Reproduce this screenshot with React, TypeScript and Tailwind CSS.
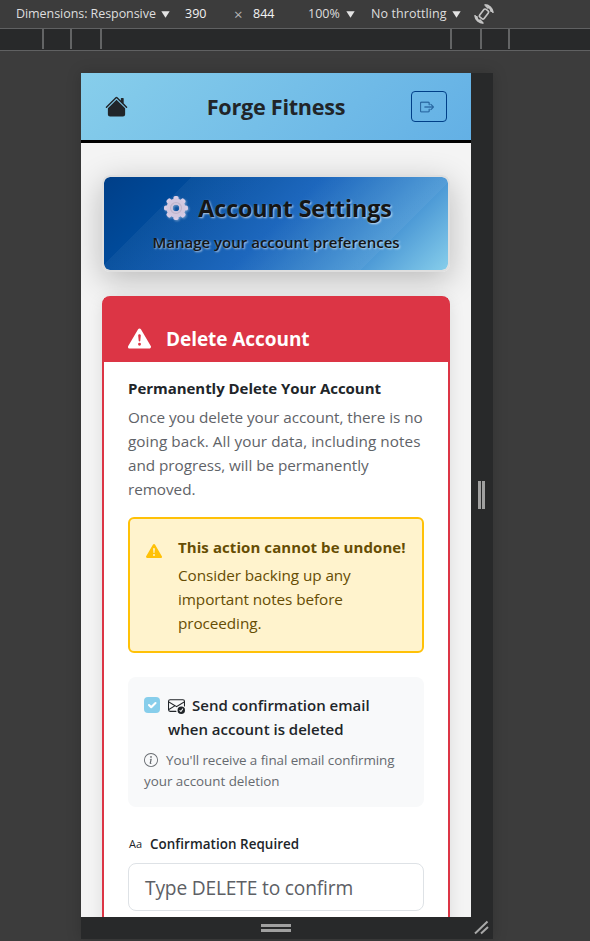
import React from "react";
import {
  BsHouseFill,
  BsBoxArrowRight,
  BsExclamationTriangleFill,
  BsEnvelopeCheck,
  BsInfoCircle,
} from "react-icons/bs";

function Caret() {
  return (
    <svg className="h-[7px] w-[9px] shrink-0" viewBox="0 0 9 7">
      <path d="M0.3 0.3h8.4L4.5 6.8z" fill="#e3e3e3" />
    </svg>
  );
}

function Toolbar() {
  return (
    <div className="flex h-7 items-center pt-px text-[12.5px] leading-none whitespace-nowrap text-[#dedede]">
      <span className="ml-4 w-[145px] tracking-[-0.06px]">Dimensions: Responsive</span>
      <Caret />
      <span className="ml-[15px] w-[49px] text-[#f2f2f2]">390</span>
      <span className="w-[19px] text-[15px] text-[#b5b5b5]">×</span>
      <span className="w-[55px] text-[#f2f2f2]">844</span>
      <span className="w-[38px]">100%</span>
      <Caret />
      <span className="ml-4 w-[81px] tracking-[0.08px]">No throttling</span>
      <Caret />
      <svg className="-mt-px ml-3 h-[22px] w-[22px]" viewBox="0 0 22 22" fill="none" stroke="#c4c4c4" strokeWidth="1.7">
        <rect x="8.2" y="6" width="5.6" height="10" rx="1.6" transform="rotate(38 11 11)" />
        <path d="M11.5 1.8c4.5 0 8 3.2 8.6 8M12 2l3.500 3.500M15 3.500c2 1.200 3.300 3.200 3.500 5.500M10.500 20.200c-4.500 0-8-3.200-8.600-8M10 20l-3.500-3.500M7 18.500c-2-1.200-3.300-3.200-3.500-5.500" />
      </svg>
    </div>
  );
}

function Ruler() {
  return (
    <div className="flex h-[23px] border-y border-[#606162] bg-[#28292a]">
      <div className="ml-[42px] h-5 w-[30px] border-x-2 border-[#636465]" />
      <div className="h-5 w-[30px] border-r-2 border-[#636465]" />
      <div className="ml-[348px] h-5 w-8 border-x-2 border-[#636465]" />
      <div className="h-5 w-7 border-r-2 border-[#636465]" />
    </div>
  );
}

function Gear() {
  return (
    <svg className="h-[26px] w-[26px] shrink-0 drop-shadow-[1px_1px_1px_rgba(255,255,255,0.4)]" viewBox="-13 -13 26 26">
      <g fill="#d9cde6">
        {[0, 45, 90, 135, 180, 225, 270, 315].map((a) => (
          <rect key={a} x="-2.6" y="-12" width="5.2" height="7" rx="1.8" transform={`rotate(${a})`} />
        ))}
      </g>
      <circle r="6.6" fill="none" stroke="#d3c8df" strokeWidth="6" />
      <circle r="5.4" fill="none" stroke="#bfb5cb" strokeWidth="1.4" />
      <circle r="4" fill="none" stroke="#d0c5db" strokeWidth="1.6" />
    </svg>
  );
}

function Banner() {
  return (
    <div className="h-[97px] rounded-lg border-2 border-[#dfdfdf] bg-[linear-gradient(135deg,transparent_20%,rgba(255,255,255,0.045)_20%,rgba(255,255,255,0.045)_80%,transparent_80%),linear-gradient(135deg,#003f88_0%,#004a9a_20%,#1360ba_50%,#4d9ad6_80%,#87ceeb_100%)] bg-clip-padding text-center text-[#151515] shadow-[0_8px_32px_rgba(0,0,0,0.24)]">
      <div className="mt-[15px] flex h-8 items-center justify-center gap-[9px] pl-[3px]">
        <Gear />
        <span className="text-[23.3px] leading-8 font-bold tracking-[-0.12px] [text-shadow:1px_1px_2px_rgba(255,255,255,0.7)]">Account Settings</span>
      </div>
      <p className="mt-[6px] text-[15px] leading-6 font-semibold tracking-[0.01px] [text-shadow:1px_1px_2px_rgba(255,255,255,0.7)]">
        Manage your account preferences
      </p>
    </div>
  );
}

function DeleteCard() {
  return (
    <div className="mt-6 h-[700px] rounded-lg border-2 border-[#dc3545] bg-white shadow-[0_4px_16px_rgba(0,0,0,0.1)]">
      <div className="flex h-16 items-center bg-[#dc3545] pt-[18px] pl-6 text-white">
        <BsExclamationTriangleFill className="-mt-[2px] h-[23px] w-[23px]" />
        <h2 className="ml-[15px] text-[19px] leading-7 font-bold tracking-[-0.06px]">Delete Account</h2>
      </div>
      <div className="px-6 pt-[14px]">
        <h3 className="text-[15px] leading-6 font-bold tracking-[-0.04px] whitespace-nowrap text-[#212529]">Permanently Delete Your Account</h3>
        <p className="mt-[5px] text-[15.3px] leading-6 tracking-[-0.05px] whitespace-nowrap text-[#5f6368]">
          Once you delete your account, there is no<br /><span className="tracking-[0.05px]">going back. All your data, including notes</span><br />and progress, will be permanently<br />removed.
        </p>
        <div className="mt-[16px] flex h-[136px] rounded-md border-2 border-[#ffc107] bg-[#fff3cd] pt-4 pl-4 whitespace-nowrap text-[#664d03]">
          <BsExclamationTriangleFill className="mt-2 h-4 w-4 text-[#ffc107]" />
          <div className="ml-4">
            <h4 className="text-[15px] leading-6 font-bold tracking-[0.08px]">This action cannot be undone!</h4>
            <p className="mt-1 text-[15.3px] leading-6 tracking-[-0.08px]">Consider backing up any<br />important notes before<br />proceeding.</p>
          </div>
        </div>
        <div className="mt-6 h-[130px] rounded-lg bg-[#f8f9fa] px-4 pt-4 whitespace-nowrap">
          <div className="flex">
            <span className="mt-1 flex h-4 w-4 items-center justify-center rounded bg-[#87ceeb]">
              <svg className="h-4 w-4" viewBox="0 0 16 16" fill="none" stroke="#fff" strokeWidth="2.1" strokeLinecap="round" strokeLinejoin="round">
                <path d="M5 8l2.2 2.2L11.500 6" />
              </svg>
            </span>
            <div className="ml-2 text-[15px] leading-6 font-semibold text-[#212529]">
              <div className="flex items-center">
                <BsEnvelopeCheck className="mr-[7px] h-[17px] w-[17px]" />
                Send confirmation email
              </div>
              when account is deleted
            </div>
          </div>
          <p className="mt-[9px] text-[13.4px] leading-[21px] tracking-[-0.07px] text-[#666a6f]">
            <BsInfoCircle className="mr-2 mb-[2px] inline h-[14px] w-[14px]" />You'll receive a final email confirming<br /><span className="tracking-[-0.02px]">your account deletion</span>
          </p>
        </div>
        <div className="mt-[25px] flex h-6 items-center pl-px text-[#212529]">
          <span className="w-[21px] text-[11px]">Aa</span>
          <span className="text-[13.4px] font-semibold tracking-[0.06px]">Confirmation Required</span>
        </div>
        <div className="mt-[7px] flex h-12 items-center rounded-lg border border-[#dee2e6] bg-white pt-[3px] pl-4 text-[19.2px] tracking-[-0.18px] text-[#5d6065]">Type DELETE to confirm</div>
      </div>
    </div>
  );
}

export default function App() {
  return (
    <div className="h-[941px] w-[590px] overflow-hidden bg-[#3c3c3c] font-['Open_Sans','Noto_Sans',sans-serif]">
      <Toolbar />
      <Ruler />
      <div className="mt-[22px] ml-[81px] grid h-[866px] w-[412px] grid-cols-[390px_22px] grid-rows-[844px_22px] bg-[#28292a] shadow-[0_0_14px_rgba(0,0,0,0.18)]">
        <main className="overflow-hidden bg-[#f4f4f4]">
          <header className="flex h-[70px] items-center justify-between border-b-[3px] border-black bg-[linear-gradient(135deg,#87ceeb,#63b0e5)] px-6 text-[#212529]">
            <BsHouseFill className="h-[23px] w-[23px]" />
            <h1 className="pt-[2px] pl-[13px] text-[21.6px] font-bold tracking-[-0.25px]">Forge Fitness</h1>
            <span className="flex h-[31px] w-9 items-center rounded border border-[#003f88] pl-2 text-[#28659f]">
              <BsBoxArrowRight className="h-[14px] w-[14px]" strokeWidth="0.3" />
            </span>
          </header>
          <div className="px-[21px] pt-8">
            <Banner />
            <DeleteCard />
          </div>
        </main>
        <div className="flex items-center justify-center gap-[1px] pr-px">
          <span className="h-7 w-[3px] bg-[#a0a0a0]" />
          <span className="h-7 w-[3px] bg-[#a0a0a0]" />
        </div>
        <div className="flex flex-col items-center justify-center gap-[2px]">
          <span className="h-[3px] w-[30px] bg-[#a0a0a0]" />
          <span className="h-[3px] w-[30px] bg-[#a0a0a0]" />
        </div>
        <svg viewBox="0 0 22 22" className="h-[22px] w-[22px]" stroke="#a8a8a8" strokeWidth="2">
          <path d="M4 16.500L16.500 4.500M10 16.500l7-6.500" />
        </svg>
      </div>
    </div>
  );
}
